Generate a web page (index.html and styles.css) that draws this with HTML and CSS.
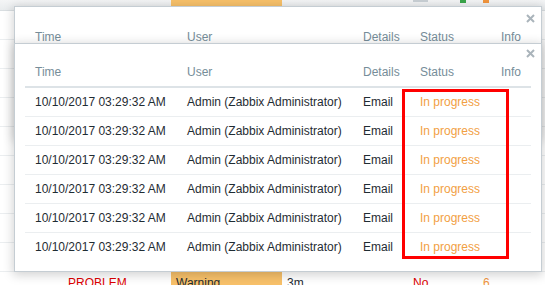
FILE: index.html
```html
<!DOCTYPE html>
<html lang="en">
<head>
    <meta charset="UTF-8">
    <title>Action log</title>
    <link rel="stylesheet" href="styles.css">
</head>
<body>

<div class="page">
    <div class="bg-row top">
        <span class="bg-cell c-status"></span>
        <span class="bg-cell c-sev warning"></span>
        <span class="bg-cell c-dur"></span>
        <span class="bg-cell c-ack"><i class="bar gray"></i><i class="bar green"></i></span>
        <span class="bg-cell c-act"><i class="bar orange"></i></span>
    </div>
    <div class="bg-row"></div>
    <div class="bg-row"></div>
    <div class="bg-row"></div>
    <div class="bg-row"></div>
    <div class="bg-row"></div>
    <div class="bg-row"></div>
    <div class="bg-row"></div>
    <div class="bg-row"></div>
    <div class="bg-row"></div>
    <div class="bg-row last">
        <span class="bg-cell c-status red">PROBLEM</span>
        <span class="bg-cell c-sev warning">Warning</span>
        <span class="bg-cell c-dur">3m</span>
        <span class="bg-cell c-ack red">No</span>
        <span class="bg-cell c-act orange-text">6</span>
    </div>
</div>

<!-- first hint box, mostly hidden behind the second -->
<div class="overlay first">
    <div class="overlay-head">
        <svg class="close" width="9" height="9" viewBox="0 0 9 9"><path d="M1 1L8 8M8 1L1 8"/></svg>
    </div>
    <table class="log">
        <thead>
            <tr><th>Time</th><th>User</th><th>Details</th><th>Status</th><th>Info</th></tr>
        </thead>
    </table>
</div>

<div class="overlay second">
    <div class="overlay-head">
        <svg class="close" width="9" height="9" viewBox="0 0 9 9"><path d="M1 1L8 8M8 1L1 8"/></svg>
    </div>
    <table class="log">
        <thead>
            <tr><th>Time</th><th>User</th><th>Details</th><th>Status</th><th>Info</th></tr>
        </thead>
        <tbody>
            <tr><td>10/10/2017 03:29:32 AM</td><td>Admin (Zabbix Administrator)</td><td>Email</td><td class="progress">In progress</td><td></td></tr>
            <tr><td>10/10/2017 03:29:32 AM</td><td>Admin (Zabbix Administrator)</td><td>Email</td><td class="progress">In progress</td><td></td></tr>
            <tr><td>10/10/2017 03:29:32 AM</td><td>Admin (Zabbix Administrator)</td><td>Email</td><td class="progress">In progress</td><td></td></tr>
            <tr><td>10/10/2017 03:29:32 AM</td><td>Admin (Zabbix Administrator)</td><td>Email</td><td class="progress">In progress</td><td></td></tr>
            <tr><td>10/10/2017 03:29:32 AM</td><td>Admin (Zabbix Administrator)</td><td>Email</td><td class="progress">In progress</td><td></td></tr>
            <tr><td>10/10/2017 03:29:32 AM</td><td>Admin (Zabbix Administrator)</td><td>Email</td><td class="progress">In progress</td><td></td></tr>
        </tbody>
    </table>
</div>

<div class="highlight"></div>

</body>
</html>
```

FILE: styles.css
```css
body {
    margin: 0;
    font-family: "Liberation Sans", Arial, sans-serif;
    font-size: 12px;
    color: #1f2c33;
    background: #fff;
    overflow: hidden;
}

/* page behind the popups */
.page {
    width: 545px;
}

.bg-row {
    display: flex;
    height: 28px;
    border-bottom: 1px solid #ebeef0;
}

.bg-row.top {
    height: 10px;
    background: linear-gradient(#f4f5f6, #e9ecee);
    border-bottom-color: #d9dee1;
}

.bg-row.last {
    height: 29px;
    border-bottom: none;
}

.bg-cell {
    display: block;
    line-height: 16px;
    padding-top: 3px;
}

.c-status {
    margin-left: 68px;
    width: 103px;
}

.c-sev {
    width: 106px;
    padding-left: 5px;
}

.c-dur {
    width: 126px;
    padding-left: 5px;
}

.c-ack {
    width: 70px;
}

.top .bg-cell {
    padding-top: 0;
}

.top .c-ack {
    display: flex;
    align-items: flex-start;
}

.warning {
    background: #f8c16a;
}

.red {
    color: #dc0000;
}

.orange-text {
    color: #f2953d;
}

.bar {
    display: block;
    height: 2px;
}

.bar.gray {
    width: 15px;
    background: #c9d0d5;
}

.bar.green {
    margin-left: 32px;
    width: 6px;
    height: 3px;
    background: #3aa64a;
}

.bar.orange {
    width: 6px;
    height: 3px;
    background: #f2953d;
}

/* hint boxes */
.overlay {
    position: absolute;
    left: 14px;
    width: 506px;
    padding: 0 10px 10px 10px;
    background: #fff;
    border: 1px solid #c5cdd3;
    box-shadow: 0 2px 10px 1px rgba(0, 0, 0, 0.18);
}

.overlay.first {
    top: 6px;
    height: 120px;
}

.overlay.second {
    top: 43px;
}

.overlay-head {
    height: 14px;
    display: flex;
    justify-content: flex-end;
    align-items: flex-end;
}

.overlay.first .overlay-head {
    height: 16px;
}

.close {
    margin-right: -4px;
    stroke: #aab4bb;
    stroke-width: 2;
}

table.log {
    width: 506px;
    border-collapse: collapse;
    table-layout: fixed;
}

.log th,
.log td {
    height: 28px;
    padding: 0 0 0 10px;
    text-align: left;
    white-space: nowrap;
    overflow: hidden;
}

.log th {
    font-weight: normal;
    color: #768d99;
    border-bottom: 2px solid #dde3e7;
}

.log th:nth-child(1) { width: 142px; }
.log th:nth-child(2) { width: 166px; }
.log th:nth-child(3) { width: 47px; }
.log th:nth-child(4) { width: 71px; }

.log td {
    border-bottom: 1px solid #ebeef0;
}

.log tbody tr:last-child td {
    border-bottom: none;
}

.log .progress {
    color: #f2a043;
}

.highlight {
    position: absolute;
    left: 402px;
    top: 89px;
    width: 101px;
    height: 164px;
    border: 3px solid #ff0000;
}
```
